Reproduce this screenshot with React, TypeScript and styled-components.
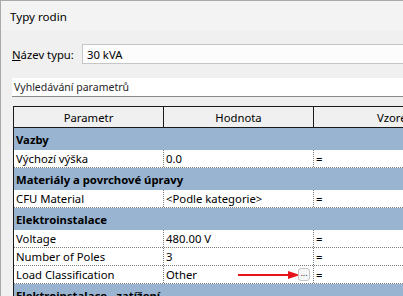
import React from 'react';
import styled, { createGlobalStyle } from 'styled-components';

const GlobalStyle = createGlobalStyle`
  html, body {
    margin: 0;
    padding: 0;
    background: #f0f0f0;
  }
  body {
    font-family: 'Noto Sans', 'Liberation Sans', sans-serif;
    font-size: 11.3px;
    color: #000;
  }
`;

const Window = styled.div`
  width: 403px;
  height: 296px;
  box-sizing: border-box;
  overflow: hidden;
  background: #f0f0f0;
  border-top: 1px solid #a9a9a9;
  border-left: 1px solid #a9a9a9;
`;

const TitleBar = styled.div`
  display: flex;
  align-items: center;
  height: 30px;
  padding-left: 9px;
  background: #f3f3f3;
  font-size: 11.6px;
`;

const Body = styled.div`
  padding: 13px 0 0 11px;
`;

const NameRow = styled.div`
  display: flex;
  align-items: center;
  height: 20px;
`;

const Label = styled.label`
  width: 70px;
  u {
    text-decoration-thickness: 1px;
  }
`;

const TextBox = styled.div`
  flex: 1;
  height: 100%;
  box-sizing: border-box;
  display: flex;
  align-items: center;
  padding-left: 4px;
  background: #fcfcfc;
  border: 1px solid #c6c6c6;
  border-right: none;
`;

const SearchBox = styled.div`
  margin-top: 14px;
  height: 19px;
  box-sizing: border-box;
  display: flex;
  align-items: center;
  padding-left: 2px;
  background: #fff;
  border-bottom: 1px solid #8a8a8a;
  color: #262626;
  font-size: 10.5px;
`;

const Table = styled.div`
  margin-top: 9px;
  margin-left: 1px;
  width: 461px;
  border-top: 1px solid #1a1a1a;
  border-left: 1px solid #1a1a1a;
  background: #fff;
`;

const Row = styled.div<{ $kind: 'head' | 'group' | 'data' }>`
  display: grid;
  grid-template-columns: 150px 150px 1fr;
  height: ${({ $kind }) => ($kind === 'data' ? '18px' : $kind === 'group' ? '22px' : '21px')};
  box-sizing: border-box;
  background: ${({ $kind }) =>
    $kind === 'head' ? '#f0f0f0' : $kind === 'group' ? '#99b4d1' : '#fff'};
  border-bottom: ${({ $kind }) =>
    $kind === 'head'
      ? '1px solid #1a1a1a'
      : $kind === 'data'
      ? '1px dotted #7a7a7a'
      : 'none'};
`;

const HeadCell = styled.div`
  display: flex;
  align-items: center;
  justify-content: center;
  border-right: 1px solid #1a1a1a;
  &:last-child {
    border-right: none;
  }
`;

const GroupCell = styled.div`
  grid-column: 1 / -1;
  display: flex;
  align-items: center;
  padding-left: 2px;
  font-weight: 700;
`;

const Cell = styled.div`
  position: relative;
  display: flex;
  align-items: center;
  padding-left: 2px;
  white-space: nowrap;
  border-right: 1px dotted #7a7a7a;
  &:last-child {
    border-right: none;
  }
`;

const Ellipsis = styled.span`
  position: absolute;
  right: 3px;
  top: 2px;
  width: 12px;
  height: 13px;
  box-sizing: border-box;
  border: 1px solid #c4c4c4;
  border-radius: 3px;
  background: #f6f6f6;
  font-size: 9px;
  line-height: 8px;
  text-align: center;
  color: #333;
`;

const Arrow = styled.svg`
  position: absolute;
  left: 74px;
  top: 4px;
`;

type Item =
  | { group: string }
  | { name: string; value: string; picker?: boolean };

const rows: Item[] = [
  { group: 'Vazby' },
  { name: 'Výchozí výška', value: '0.0' },
  { group: 'Materiály a povrchové úpravy' },
  { name: 'CFU Material', value: '<Podle kategorie>' },
  { group: 'Elektroinstalace' },
  { name: 'Voltage', value: '480.00 V' },
  { name: 'Number of Poles', value: '3' },
  { name: 'Load Classification', value: 'Other', picker: true },
  { group: 'Elektroinstalace - zatížení' },
];

export default function App() {
  return (
    <>
      <GlobalStyle />
      <Window>
        <TitleBar>Typy rodin</TitleBar>
        <Body>
          <NameRow>
            <Label>
              <u>N</u>ázev typu:
            </Label>
            <TextBox>30 kVA</TextBox>
          </NameRow>
          <SearchBox>Vyhledávání parametrů</SearchBox>
          <Table>
            <Row $kind="head">
              <HeadCell>Parametr</HeadCell>
              <HeadCell>Hodnota</HeadCell>
              <HeadCell>Vzorec</HeadCell>
            </Row>
            {rows.map((r, i) =>
              'group' in r ? (
                <Row key={i} $kind="group">
                  <GroupCell>{r.group}</GroupCell>
                </Row>
              ) : (
                <Row key={i} $kind="data">
                  <Cell>{r.name}</Cell>
                  <Cell>
                    {r.value}
                    {r.picker && (
                      <>
                        <Arrow width="62" height="10" viewBox="0 0 62 10">
                          <line x1="0" y1="5" x2="52" y2="5" stroke="#e8141a" strokeWidth="2" />
                          <polygon points="50,1 62,5 50,9" fill="#e8141a" />
                        </Arrow>
                        <Ellipsis>...</Ellipsis>
                      </>
                    )}
                  </Cell>
                  <Cell>=</Cell>
                </Row>
              )
            )}
          </Table>
        </Body>
      </Window>
    </>
  );
}
